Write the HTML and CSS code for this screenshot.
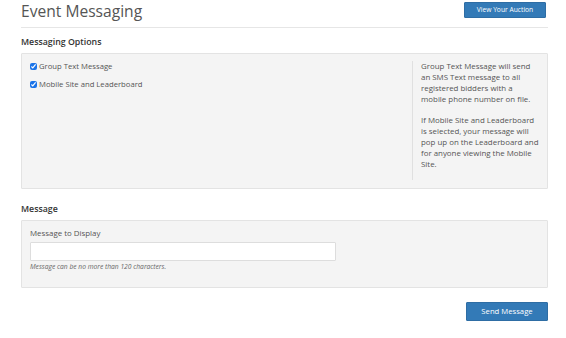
FILE: index.html
```html
<!DOCTYPE html>
<html lang="en">
<head>
<meta charset="utf-8">
<title>Event Messaging</title>
<link rel="stylesheet" href="styles.css">
</head>
<body>
<div class="page">
  <header class="page-header">
    <h1 class="title">Event Messaging</h1>
    <button class="btn btn-small" type="button">View Your Auction</button>
  </header>

  <h2 class="section-title">Messaging Options</h2>
  <div class="panel options">
    <div class="options-left">
      <label class="check"><input type="checkbox" checked><span>Group Text Message</span></label>
      <label class="check"><input type="checkbox" checked><span>Mobile Site and Leaderboard</span></label>
    </div>
    <div class="options-right">
      <p>Group Text Message will send<br>an SMS Text message to all<br>registered bidders with a<br>mobile phone number on file.</p>
      <p>If Mobile Site and Leaderboard<br>is selected, your message will<br>pop up on the Leaderboard and<br>for anyone viewing the Mobile<br>Site.</p>
    </div>
  </div>

  <h2 class="section-title second">Message</h2>
  <div class="panel message">
    <label class="field-label" for="msg">Message to Display</label>
    <input class="text-input" id="msg" type="text">
    <p class="help">Message can be no more than 120 characters.</p>
  </div>

  <div class="actions">
    <button class="btn btn-send" type="button">Send Message</button>
  </div>
</div>
</body>
</html>
```
FILE: styles.css
```css
* { box-sizing: border-box; }

html, body {
  margin: 0;
  padding: 0;
  background: #ffffff;
}

body {
  font-family: "Open Sans", "Liberation Sans", sans-serif;
  color: #555555;
  font-size: 7.9px;
  line-height: 11px;
}

.page {
  width: 527px;
  margin-left: 21px;
}

.page-header {
  display: flex;
  justify-content: space-between;
  align-items: flex-start;
  height: 28px;
  border-bottom: 1px solid #e6e6e6;
}

.title {
  margin: 1px 0 0 0;
  font-size: 15.6px;
  line-height: 20px;
  font-weight: 400;
  color: #555555;
}

.btn {
  font-family: "Open Sans", "Liberation Sans", sans-serif;
  background: #337ab7;
  border: 1px solid #2e6da4;
  color: #ffffff;
  border-radius: 1px;
  padding: 0;
  cursor: pointer;
}

.btn-small {
  margin-top: 2px;
  margin-right: 2px;
  width: 82px;
  height: 16px;
  font-size: 6.7px;
  line-height: 14px;
}

.section-title {
  margin: 8px 0 5px 0;
  font-size: 8.8px;
  line-height: 12px;
  font-weight: 600;
  color: #333333;
}

.section-title.second {
  margin-top: 14px;
}

.panel {
  background: #f4f4f4;
  border: 1px solid #e3e3e3;
  border-radius: 1px;
  padding: 7px 8px 8px 8px;
}

.options {
  display: flex;
  justify-content: space-between;
}

.options-left {
  display: flex;
  flex-direction: column;
  gap: 7px;
}

.check {
  display: flex;
  align-items: center;
  height: 11px;
  font-size: 7.7px;
}

.check input {
  width: 7px;
  height: 7px;
  margin: 0 2px 0 0;
  accent-color: #1a73e8;
}

.options-right {
  width: 127px;
  border-left: 1px solid #e0e0e0;
  padding-left: 8px;
  white-space: nowrap;
}

.options-right p {
  margin: 0 0 10px 0;
}

.field-label {
  display: block;
  line-height: 11px;
}

.text-input {
  display: block;
  margin-top: 3px;
  width: 306px;
  height: 19px;
  background: #ffffff;
  border: 1px solid #dddddd;
  border-radius: 1px;
  padding: 0 4px;
}

.help {
  margin: 1px 0 8px 0;
  font-size: 6.7px;
  line-height: 9px;
  font-style: italic;
  color: #666666;
}

.actions {
  display: flex;
  justify-content: flex-end;
  margin-top: 14px;
}

.btn-send {
  width: 82px;
  height: 19px;
  font-size: 7.7px;
  line-height: 17px;
}
```
